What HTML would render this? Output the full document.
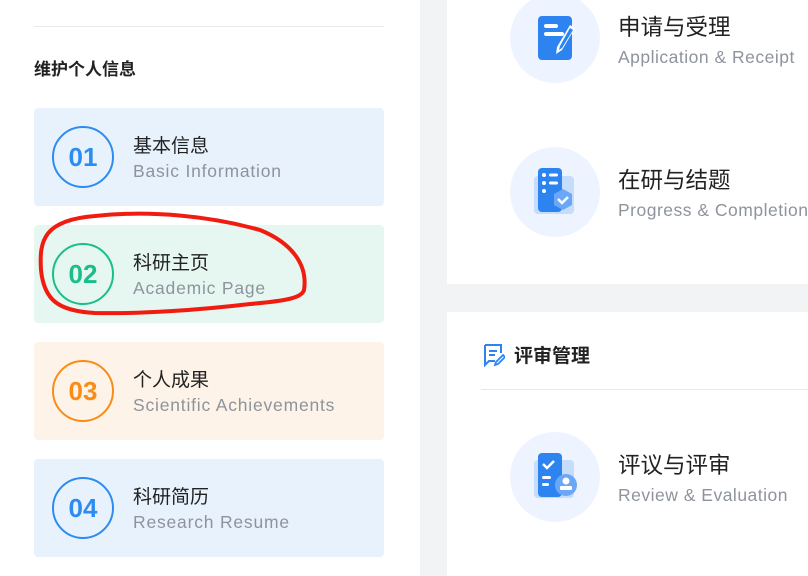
<!DOCTYPE html>
<html><head><meta charset="utf-8"><style>
*{margin:0;padding:0;box-sizing:border-box}
body{width:808px;height:576px;overflow:hidden;background:#f2f3f5;font-family:"Liberation Sans","Noto Sans CJK SC",sans-serif;position:relative}
.left{position:absolute;left:0;top:0;width:420px;height:576px;background:#fff}
.line{position:absolute;height:1px;background:#e6e8eb}
.ttl{position:absolute;left:34px;top:55px;font-size:17px;font-weight:bold;color:#222}
.card{position:absolute;left:34px;width:350px;height:98px;border-radius:4px}
.circ{position:absolute;left:18px;top:18px;width:62px;height:62px;border-radius:50%;border:2px solid;font-size:26px;font-weight:bold;text-align:center;line-height:58px}
.ct{position:absolute;left:99px;top:23px;font-size:19px;color:#222;white-space:nowrap}
.cs{position:absolute;left:99px;top:53px;font-size:17.5px;color:#8e939c;letter-spacing:0.8px;white-space:nowrap}
.rp{position:absolute;left:447px;width:361px;background:#fff}
.ic{position:absolute;left:510px;width:90px;height:90px;border-radius:50%;background:#eef4ff}
.rt{position:absolute;left:618px;font-size:22.5px;color:#222;white-space:nowrap}
.rs{position:absolute;left:618px;font-size:17.5px;color:#8e939c;letter-spacing:0.5px;white-space:nowrap}
</style></head><body>
<div class="left">
<div class="line" style="left:34px;top:26px;width:350px"></div>
<div class="ttl">维护个人信息</div>
<div class="card" style="top:108px;background:#e8f2fd"><div class="circ" style="border-color:#2d8cf0;color:#2d8cf0">01</div><div class="ct">基本信息</div><div class="cs">Basic Information</div></div>
<div class="card" style="top:225px;background:#e6f7f2"><div class="circ" style="border-color:#19be8b;color:#19be8b">02</div><div class="ct">科研主页</div><div class="cs">Academic Page</div></div>
<div class="card" style="top:342px;background:#fdf3e8"><div class="circ" style="border-color:#fa8c16;color:#fa8c16">03</div><div class="ct">个人成果</div><div class="cs">Scientific Achievements</div></div>
<div class="card" style="top:459px;background:#e8f2fd"><div class="circ" style="border-color:#2d8cf0;color:#2d8cf0">04</div><div class="ct">科研简历</div><div class="cs">Research Resume</div></div>
</div>
<div class="rp" style="top:0;height:284px"></div>
<div class="rp" style="top:312px;height:264px"></div>

<div class="ic" style="top:-7px"></div>
<svg style="position:absolute;left:536px;top:14px" width="40" height="48" viewBox="0 0 40 48"><rect x="2" y="2" width="34" height="44" rx="4" fill="#2d84f0"/><rect x="8" y="10" width="14" height="4" rx="2" fill="#fff"/><rect x="8" y="18" width="20" height="4" rx="2" fill="#fff"/><path d="M34 11l5 3-13 22-6 4 1-7z" fill="#fff"/><path d="M34 14l3 2-11 18-3 2 1-4z" fill="#2d84f0"/></svg>
<div class="rt" style="top:10px">申请与受理</div><div class="rs" style="top:47px">Application &amp; Receipt</div>

<div class="ic" style="top:147px"></div>
<svg style="position:absolute;left:532px;top:166px" width="46" height="50" viewBox="0 0 46 50"><rect x="2" y="10" width="40" height="38" rx="4" fill="#c5dcfb"/><rect x="6" y="2" width="24" height="44" rx="4" fill="#2d84f0"/><circle cx="12" cy="9" r="2" fill="#fff"/><rect x="17" y="7.5" width="9" height="3" rx="1.5" fill="#fff"/><circle cx="12" cy="17" r="2" fill="#fff"/><rect x="17" y="15.5" width="9" height="3" rx="1.5" fill="#fff"/><circle cx="12" cy="25" r="2" fill="#fff"/><path d="M31 23l9 5v11l-9 5-9-5v-11z" fill="#6aa8f7"/><path d="M26 33l4 4 6-6" stroke="#fff" stroke-width="2.5" fill="none"/></svg>
<div class="rt" style="top:163px">在研与结题</div><div class="rs" style="top:200px">Progress &amp; Completion</div>

<svg style="position:absolute;left:483px;top:343px" width="22" height="24" viewBox="0 0 22 24"><path d="M2 2h16v8M2 2v20l4-4h6" stroke="#2d84f0" stroke-width="2" fill="none"/><path d="M6 8h8M6 12h6" stroke="#2d84f0" stroke-width="2"/><path d="M20 12l2 2-7 7-3 1 1-3z" stroke="#2d84f0" stroke-width="1.8" fill="none"/></svg>
<div style="position:absolute;left:514px;top:341px;font-size:19px;font-weight:bold;color:#222">评审管理</div>
<div class="line" style="left:481px;top:389px;width:327px"></div>

<div class="ic" style="top:432px"></div>
<svg style="position:absolute;left:532px;top:452px" width="46" height="50" viewBox="0 0 46 50"><rect x="2" y="8" width="40" height="38" rx="4" fill="#c5dcfb"/><rect x="6" y="1" width="24" height="44" rx="4" fill="#2d84f0"/><path d="M11 12l4 4 7-7" stroke="#fff" stroke-width="2.5" fill="none"/><rect x="10" y="24" width="9" height="3" rx="1.5" fill="#fff"/><rect x="10" y="31" width="7" height="3" rx="1.5" fill="#fff"/><circle cx="34" cy="33" r="11" fill="#6aa8f7"/><circle cx="34" cy="29" r="3.5" fill="#fff"/><rect x="28" y="34" width="12" height="4" rx="1" fill="#fff"/></svg>
<div class="rt" style="top:448px">评议与评审</div><div class="rs" style="top:485px">Review &amp; Evaluation</div>

<svg style="position:absolute;left:0;top:0" width="420" height="576"><path d="M95 216 C150 210 210 216 260 230 C292 243 308 265 304 290 C302 298 285 301 250 304 C200 310 140 314 95 313 C58 311 44 300 41 270 C39 240 44 220 95 216 Z" stroke="#f01c10" stroke-width="4" fill="none"/></svg>
</body></html>
